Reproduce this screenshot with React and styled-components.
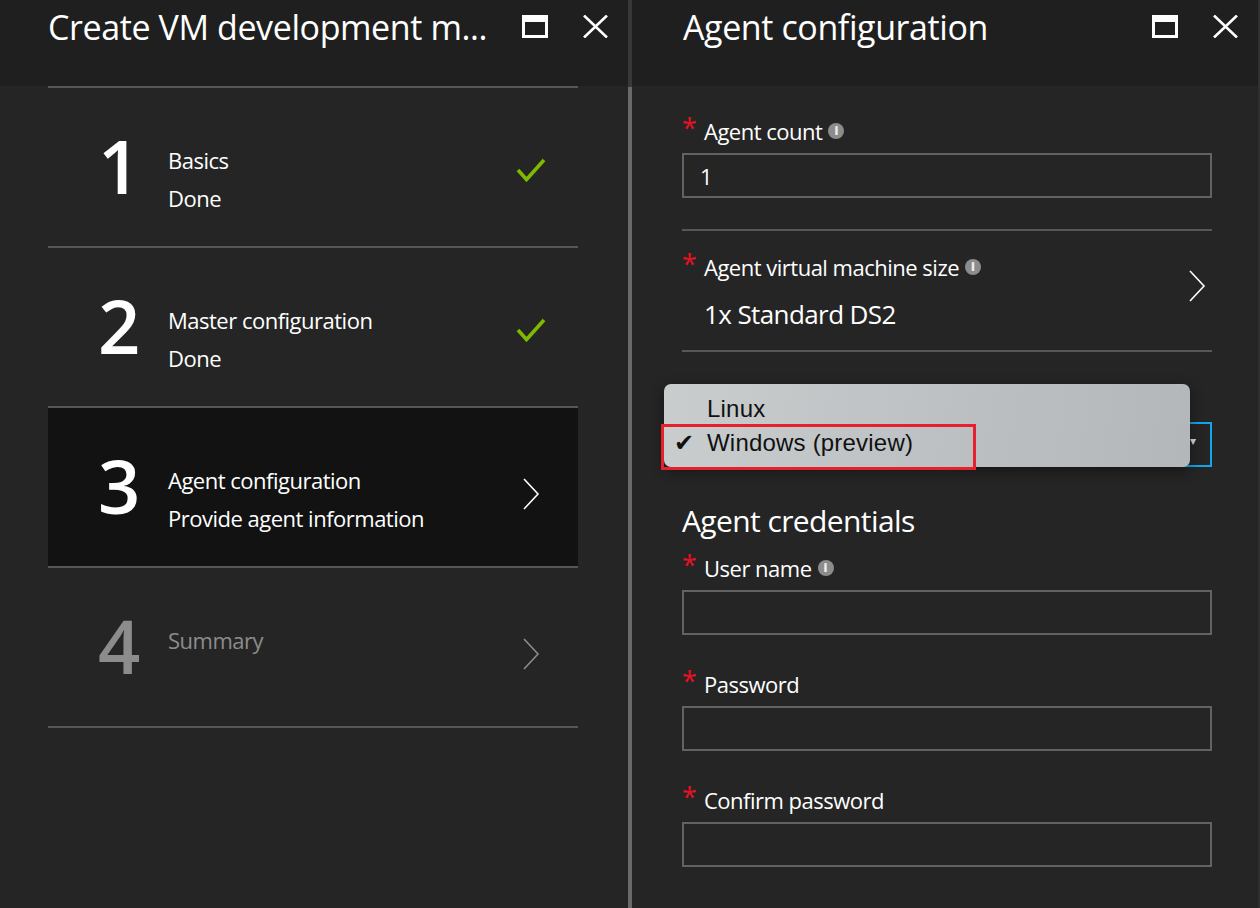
import React from "react";
import styled, { createGlobalStyle } from "styled-components";

const Global = createGlobalStyle`
  body {
    margin: 0;
    background: #252525;
    font-family: "Open Sans", "Noto Sans", sans-serif;
    color: #fff;
  }
`;

const Page = styled.div`
  display: flex;
  width: 1260px;
  height: 908px;
  overflow: hidden;
  background: #252525;
`;

const Blade = styled.div`
  display: flex;
  flex-direction: column;
  width: ${(p) => p.width}px;
  flex-shrink: 0;
`;

const Divider = styled.div`
  width: 4px;
  flex-shrink: 0;
  background: linear-gradient(#383838 0, #383838 87px, #6a6a6a 87px);
`;

const EdgeLine = styled.div`
  width: 2px;
  flex-shrink: 0;
  background: #303030;
`;

const Header = styled.div`
  height: 86px;
  flex-shrink: 0;
  background: #1f1f1f;
  display: flex;
  align-items: flex-start;
  padding: 5px ${(p) => p.right}px 0 ${(p) => p.left}px;
  box-sizing: border-box;
`;

const Title = styled.div`
  flex: 1;
  font-size: 34px;
  line-height: 44px;
  white-space: nowrap;
  overflow: hidden;
  letter-spacing: -0.4px;
`;

const HeaderIcons = styled.div`
  display: flex;
  gap: 35px;
  padding-top: 10px;
`;

const MaxIcon = () => (
  <svg width="26" height="23" viewBox="0 0 26 23">
    <rect x="1.5" y="1.5" width="23" height="20" fill="none" stroke="#fff" strokeWidth="3" />
    <rect x="1" y="1" width="24" height="6" fill="#fff" />
  </svg>
);

const CloseIcon = () => (
  <svg width="25" height="23" viewBox="0 0 25 23">
    <path d="M1 0.5 L24 22.5 M24 0.5 L1 22.5" stroke="#fff" strokeWidth="2.6" />
  </svg>
);

const Steps = styled.div`
  margin: 0 50px 0 48px;
  border-top: 2px solid #575757;
`;

const Step = styled.div`
  height: 160px;
  box-sizing: border-box;
  border-bottom: 2px solid #575757;
  display: flex;
  align-items: flex-start;
  padding: 46px 32px 0 50px;
  background: ${(p) => (p.active ? "#121212" : "transparent")};
  color: ${(p) => (p.muted ? "#8c8c8c" : "#fff")};
`;

const StepNum = styled.div`
  width: 70px;
  font-size: 74px;
  line-height: 76px;
  font-weight: 600;
  margin-top: -6px;
  letter-spacing: -2px;
`;

const StepText = styled.div`
  flex: 1;
  font-size: 22px;
  line-height: 38px;
  padding-top: 7px;
  letter-spacing: -0.5px;
`;

const StepIcon = styled.div`
  width: 30px;
  padding-top: 24px;
  padding-left: ${(p) => (p.chev ? 6 : 0)}px;
  box-sizing: border-box;
`;

const Check = () => (
  <svg width="30" height="26" viewBox="0 0 30 26">
    <path d="M2 12 L10.5 21.5 L28 2" fill="none" stroke="#7fba00" strokeWidth="3.6" />
  </svg>
);

const Chevron = ({ color = "#fff" }) => (
  <svg width="18" height="32" viewBox="0 0 18 32">
    <path d="M2 1 L16 16 L2 31" fill="none" stroke={color} strokeWidth="1.6" />
  </svg>
);

const Form = styled.div`
  padding: 30px 46px 0 50px;
  display: flex;
  flex-direction: column;
`;

const Field = styled.div`
  margin-top: ${(p) => p.mt ?? 0}px;
  margin-bottom: ${(p) => p.mb ?? 34}px;
`;

const Label = styled.div`
  display: flex;
  align-items: center;
  font-size: 22px;
  line-height: 30px;
  height: 30px;
  margin-bottom: 7px;
  letter-spacing: -0.5px;
  white-space: nowrap;
`;

const Star = styled.span`
  color: #e81123;
  width: 22px;
  font-size: 27px;
  align-self: flex-start;
  line-height: 30px;
  margin-top: -3px;
`;

const Info = styled.span`
  display: inline-flex;
  align-items: center;
  justify-content: center;
  width: 16px;
  height: 16px;
  border-radius: 50%;
  background: #8c8c8c;
  color: #ececec;
  font-size: 12px;
  font-weight: 800;
  margin-left: 6px;
  line-height: 1;
  letter-spacing: 0;
`;

const Input = styled.div`
  height: 45px;
  border: 2px solid ${(p) => (p.focus ? "#12a6ea" : "#626262")};
  box-sizing: border-box;
  display: flex;
  align-items: center;
  padding: 0 16px;
  font-size: 22px;
  position: relative;
`;

const Rule = styled.div`
  height: 2px;
  background: #575757;
`;

const Picker = styled.div`
  display: flex;
  align-items: center;
  padding: 21px 0 18px;
`;

const PickerText = styled.div`
  flex: 1;
`;

const PickerValue = styled.div`
  font-size: 26px;
  line-height: 36px;
  padding: 7px 0 0 22px;
  letter-spacing: -0.6px;
`;

const PickerChevron = styled.div`
  padding: 0 6px 8px 0;
`;

const LabelSpace = styled.div`
  height: 37px;
`;

const Section = styled.div`
  font-size: 30px;
  line-height: 40px;
  margin: 34px 0 12px;
  letter-spacing: -0.6px;
`;

const Caret = styled.span`
  position: absolute;
  right: 14px;
  top: 8px;
  font-size: 12px;
  color: #ddd;
`;

const Menu = styled.div`
  position: absolute;
  left: -20px;
  top: -40px;
  width: 526px;
  height: 83px;
  border-radius: 7px;
  background: linear-gradient(100deg, #c9cdce 0%, #bcc0c2 55%, #b3b7b9 100%);
  box-shadow: 0 4px 14px rgba(0, 0, 0, 0.45);
  padding-top: 8px;
  box-sizing: border-box;
  font-family: "Liberation Sans", Arial, sans-serif;
  color: #111;
  z-index: 2;
`;

const MenuItem = styled.div`
  display: flex;
  align-items: center;
  height: 34px;
  font-size: 24px;
  letter-spacing: 0.2px;
`;

const Tick = styled.span`
  width: 43px;
  padding-left: 10px;
  box-sizing: border-box;
  font-family: "DejaVu Sans", sans-serif;
  font-size: 24px;
`;

const Highlight = styled.div`
  position: absolute;
  left: -23px;
  top: 0;
  width: 315px;
  height: 46px;
  border: 3px solid #e6202c;
  box-sizing: border-box;
  z-index: 3;
`;

const FormField = ({ label, info, value, mb }) => (
  <Field mb={mb}>
    <Label>
      <Star>*</Star>
      {label}
      {info && <Info>i</Info>}
    </Label>
    <Input>{value}</Input>
  </Field>
);

const steps = [
  { n: 1, title: "Basics", sub: "Done", icon: "check" },
  { n: 2, title: "Master configuration", sub: "Done", icon: "check" },
  { n: 3, title: "Agent configuration", sub: "Provide agent information", icon: "chev", active: true },
  { n: 4, title: "Summary", icon: "chev", muted: true },
];

export default function App() {
  return (
    <Page>
      <Global />
      <Blade width={628}>
        <Header left={48} right={20}>
          <Title>Create VM development m...</Title>
          <HeaderIcons>
            <MaxIcon />
            <CloseIcon />
          </HeaderIcons>
        </Header>
        <Steps>
          {steps.map((s) => (
            <Step key={s.n} active={s.active} muted={s.muted}>
              <StepNum>{s.n}</StepNum>
              <StepText>
                <div>{s.title}</div>
                {s.sub && <div>{s.sub}</div>}
              </StepText>
              <StepIcon chev={s.icon === "chev"}>
                {s.icon === "check" ? <Check /> : <Chevron color={s.muted ? "#8c8c8c" : "#fff"} />}
              </StepIcon>
            </Step>
          ))}
        </Steps>
      </Blade>
      <Divider />
      <Blade width={626}>
        <Header left={51} right={20}>
          <Title>Agent configuration</Title>
          <HeaderIcons>
            <MaxIcon />
            <CloseIcon />
          </HeaderIcons>
        </Header>
        <Form>
          <FormField label="Agent count" info value="1" mb={31} />
          <Rule />
          <Picker>
            <PickerText>
              <Label>
                <Star>*</Star>
                Agent virtual machine size
                <Info>i</Info>
              </Label>
              <PickerValue>1x Standard DS2</PickerValue>
            </PickerText>
            <PickerChevron>
              <Chevron />
            </PickerChevron>
          </Picker>
          <Rule />
          <Field mb={0} mt={33}>
            <LabelSpace />
            <Input focus>
              <Caret>▾</Caret>
              <Menu>
                <MenuItem>
                  <Tick />
                  Linux
                </MenuItem>
                <MenuItem>
                  <Tick>✔</Tick>
                  Windows (preview)
                </MenuItem>
              </Menu>
              <Highlight />
            </Input>
          </Field>
          <Section>Agent credentials</Section>
          <FormField label="User name" info />
          <FormField label="Password" />
          <FormField label="Confirm password" />
        </Form>
      </Blade>
      <EdgeLine />
    </Page>
  );
}
